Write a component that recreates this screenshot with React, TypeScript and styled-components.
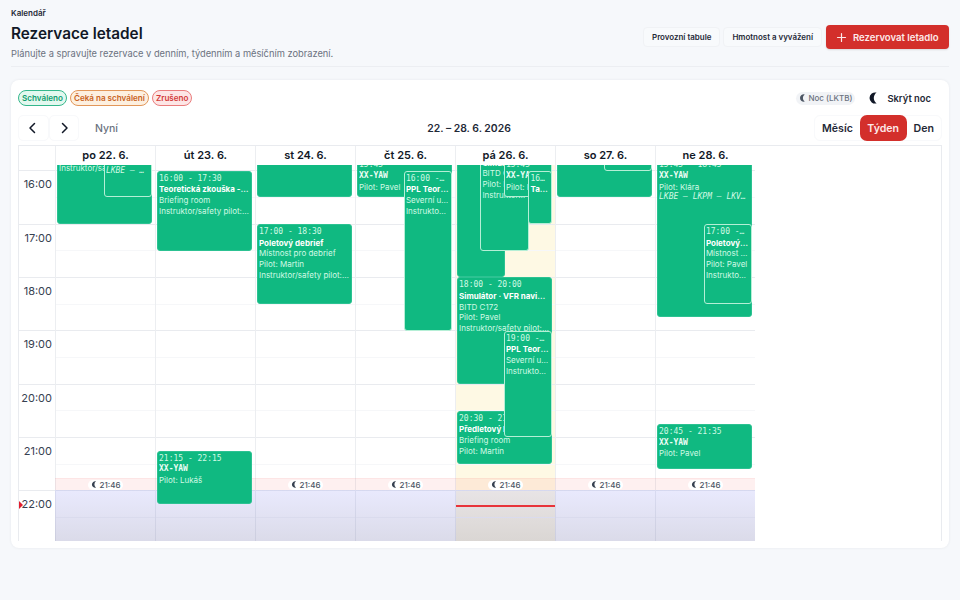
import React from "react";
import styled, { createGlobalStyle } from "styled-components";

const HOUR = 53.333;
const FIRST_HOUR = 15;
const HOURS = [15, 16, 17, 18, 19, 20, 21, 22];

const Global = createGlobalStyle`
  html, body { margin: 0; padding: 0; background: #f6f8fb; }
  body { font-family: Inter, "Liberation Sans", sans-serif; color: #111827; }
  * { box-sizing: border-box; }
`;

const Page = styled.div`
  width: 960px;
  height: 600px;
  padding: 8px 11px 0;
  overflow: hidden;
`;
const Crumb = styled.div`
  font-size: 8px;
  font-weight: 600;
  line-height: 11px;
  height: 11px;
  color: #1f2937;
`;
const HeaderRow = styled.header`
  display: flex;
  justify-content: space-between;
  align-items: flex-start;
  height: 48px;
  border-bottom: 1px solid #eceef2;
`;
const Title = styled.h1`
  margin: 5px 0 0;
  font-size: 15.3px;
  line-height: 20px;
  font-weight: 600;
  color: #111827;
`;
const Subtitle = styled.p`
  margin: 2.5px 0 0;
  font-size: 9.3px;
  line-height: 13px;
  color: #6b7280;
`;
const Actions = styled.div`
  display: flex;
  align-items: center;
  gap: 3px;
  margin-top: 6px;
`;
const GhostButton = styled.button`
  height: 20px;
  padding: 0 8px;
  border: 1px solid #f0f2f5;
  border-radius: 4px;
  background: #f8fafc;
  font: 600 7.95px Inter, sans-serif;
  color: #1f2937;
  white-space: nowrap;
`;
const PrimaryButton = styled.button`
  display: flex;
  align-items: center;
  gap: 6px;
  height: 24px;
  width: 123px;
  margin-left: 1px;
  padding: 0 0 0 10px;
  border: 0;
  border-radius: 4px;
  background: #d32f2b;
  font: 600 9.55px Inter, sans-serif;
  color: #fdeaea;
  white-space: nowrap;
  box-shadow: 0 1px 2px rgba(0, 0, 0, 0.12);
`;
const Card = styled.section`
  margin-top: 13px;
  width: 938px;
  height: 468px;
  padding: 10px 7px 7px;
  background: #fff;
  border-radius: 8px;
  box-shadow: 0 0 3px rgba(17, 24, 39, 0.07);
`;
const LegendRow = styled.div`
  display: flex;
  align-items: center;
  justify-content: space-between;
  height: 16px;
`;
const Legend = styled.div`
  display: flex;
  gap: 3px;
`;
const tones = {
  green: ["#e3f8ef", "#34b78c", "#0f9d6e"],
  orange: ["#fdf0e0", "#e2975a", "#c8621c"],
  red: ["#fde6e6", "#ea7d7d", "#d33a3a"],
} as const;
const Pill = styled.span<{ $tone: keyof typeof tones }>`
  height: 16px;
  padding: 0 3px;
  border-radius: 8px;
  border: 1px solid ${(p) => tones[p.$tone][1]};
  background: ${(p) => tones[p.$tone][0]};
  color: ${(p) => tones[p.$tone][2]};
  font-size: 8.1px;
  font-weight: 600;
  line-height: 14px;
  white-space: nowrap;
`;
const NightTools = styled.div`
  display: flex;
  align-items: center;
  margin-right: 11px;
`;
const NightChip = styled.span`
  display: flex;
  align-items: center;
  gap: 1.5px;
  height: 13px;
  padding: 0 3px;
  border-radius: 7px;
  background: #f1f3f6;
  color: #6b7280;
  font-size: 8px;
  font-weight: 500;
`;
const NightToggle = styled.span`
  display: flex;
  align-items: center;
  gap: 7px;
  margin-left: 13px;
  font-size: 9.4px;
  font-weight: 600;
  color: #1f2937;
`;
const NavRow = styled.div`
  display: flex;
  align-items: center;
  justify-content: space-between;
  height: 26px;
  margin-top: 9px;
`;
const NavLeft = styled.div`
  display: flex;
  align-items: center;
`;
const NavButton = styled.button`
  display: flex;
  align-items: center;
  justify-content: center;
  width: 30.5px;
  height: 26px;
  padding: 0;
  border: 1px solid #f8f9fb;
  border-radius: 5px;
  background: #fff;
  color: #111827;
`;
const NowLabel = styled.span`
  margin-left: 16px;
  font-size: 10.5px;
  font-weight: 500;
  color: #6b7280;
`;
const RangeTitle = styled.div`
  flex: 1;
  text-align: center;
  padding-left: 6px;
  font-size: 10.4px;
  font-weight: 600;
  color: #1f2937;
`;
const ViewSwitch = styled.div`
  display: flex;
  align-items: center;
  height: 26px;
  padding: 0 7px;
  border: 1px solid #f8f9fb;
  border-radius: 6px;
  gap: 7px;
`;
const ViewTab = styled.span<{ $active?: boolean }>`
  display: flex;
  align-items: center;
  height: 26px;
  padding: 0 ${(p) => (p.$active ? "7.5px" : "0")};
  border-radius: 7px;
  background: ${(p) => (p.$active ? "#d32f2b" : "transparent")};
  color: ${(p) => (p.$active ? "#fde8e8" : "#1f2937")};
  font-size: 10.6px;
  font-weight: 600;
`;
const Calendar = styled.div`
  margin-top: 4px;
  height: 396px;
  border: 1px solid #e9ebef;
  border-bottom: 0;
  overflow: hidden;
`;
const HeadRow = styled.div`
  display: grid;
  grid-template-columns: 36px repeat(7, 100px);
  height: 19px;
`;
const HeadCell = styled.div`
  border-left: 1px solid #eceef1;
  font-size: 11px;
  font-weight: 600;
  line-height: 18px;
  text-align: center;
  color: #111827;
  &:first-child { border-left: 0; }
`;
const Viewport = styled.div`
  height: 376px;
  overflow: hidden;
`;
const Timeline = styled.div`
  display: grid;
  grid-template-columns: 36px repeat(7, 100px);
  margin-top: -48px;
  position: relative;
`;
const Gutter = styled.div`
  position: relative;
`;
const HourLabel = styled.div`
  height: ${HOUR}px;
  padding: 6px 3px 0 0;
  border-top: 1px solid #e9ebef;
  text-align: right;
  font-size: 11px;
  line-height: 14px;
  color: #374151;
`;
const NowMarker = styled.span`
  position: absolute;
  left: 0;
  width: 0;
  height: 0;
  border-left: 4.5px solid #e11d2e;
  border-top: 4px solid transparent;
  border-bottom: 4px solid transparent;
`;
const DayColumn = styled.div<{ $today?: boolean }>`
  position: relative;
  border-left: 1.5px solid #eceef1;
  background: ${(p) => (p.$today ? "#fef9e4" : "#fff")};
`;
const Slot = styled.div<{ $hour?: boolean }>`
  height: ${HOUR / 2}px;
  border-top: 1px solid ${(p) => (p.$hour ? "#e9ebef" : "#f6f7f9")};
`;
const Twilight = styled.div`
  position: absolute;
  left: -1px;
  right: 0;
  background: rgba(239, 68, 68, 0.08);
  border-top: 1px solid rgba(239, 68, 68, 0.06);
`;
const NightShade = styled.div`
  position: absolute;
  left: -1px;
  right: 0;
  background: linear-gradient(rgba(99, 102, 241, 0.14), rgba(70, 70, 140, 0.2));
`;
const SunsetBadge = styled.span`
  position: absolute;
  left: 50%;
  transform: translateX(-50%);
  display: flex;
  align-items: center;
  gap: 2px;
  height: 10px;
  padding: 0 3px;
  border-radius: 5px;
  background: #fff;
  color: #4b5563;
  font-size: 8px;
  font-weight: 500;
  z-index: 1;
`;
const NowLine = styled.div`
  position: absolute;
  left: 0;
  right: 0;
  height: 2px;
  background: #e8343a;
  z-index: 1;
`;
const EventBox = styled.div<{ $nested?: boolean }>`
  position: absolute;
  z-index: 2;
  padding: 2px ${(p) => (p.$nested ? "2.4px 0 1.2px" : "1.5px 0 1px")};
  overflow: hidden;
  background: #10b981;
  border: 1px solid ${(p) => (p.$nested ? "#b5efd6" : "#2cc292")};
  border-radius: 3px;
`;
const lineBase = `
  white-space: nowrap;
  overflow: hidden;
  text-overflow: ellipsis;
  height: 10.6px;
  line-height: 10.6px;
`;
const EventTime = styled.div`
  ${lineBase}
  font-family: "DejaVu Sans Mono", monospace;
  font-size: 8px;
  color: #d1fae5;
`;
const EventTitle = styled.div`
  ${lineBase}
  font-size: 8px;
  font-weight: 700;
  color: #fff;
`;
const EventIdent = styled.div`
  ${lineBase}
  font-family: "DejaVu Sans Mono", monospace;
  font-size: 8px;
  font-weight: 700;
  color: #ecfdf5;
`;
const EventInfo = styled.div`
  ${lineBase}
  font-size: 8px;
  color: #d1fae5;
`;
const EventRoute = styled.div`
  ${lineBase}
  font-family: "DejaVu Sans Mono", monospace;
  font-size: 8px;
  font-style: italic;
  color: #d1fae5;
`;

type Ev = {
  s: number;
  e: number;
  left?: number;
  width?: number;
  nested?: boolean;
  time: string;
  title?: string;
  ident?: string;
  info?: string[];
  route?: string;
};

const FULL = { left: 1, width: 95 };
const HALF = { left: 47.7, width: 48.3, nested: true };
const INSTR = "Instruktor/safety pilot: Jan";

const days: { label: string; today?: boolean; events: Ev[] }[] = [
  {
    label: "po 22. 6.",
    events: [
      { s: 15, e: 17, ...FULL, time: "15:00 - 17:00", title: "Teoretická zkouška", info: ["Briefing room", "Pilot: Lukáš", INSTR] },
      { s: 15.25, e: 16.5, ...HALF, time: "15:15 - 16:30", ident: "XX-YAW", info: ["Pilot: Klára"], route: "LKBE – LKPM" },
    ],
  },
  {
    label: "út 23. 6.",
    events: [
      { s: 16, e: 17.5, ...FULL, time: "16:00 - 17:30", title: "Teoretická zkouška - PPL", info: ["Briefing room", INSTR] },
      { s: 21.25, e: 22.25, ...FULL, time: "21:15 - 22:15", ident: "XX-YAW", info: ["Pilot: Lukáš"] },
    ],
  },
  {
    label: "st 24. 6.",
    events: [
      { s: 15, e: 16.5, ...FULL, time: "15:00 - 16:30" },
      { s: 17, e: 18.5, ...FULL, time: "17:00 - 18:30", title: "Poletový debrief", info: ["Místnost pro debrief", "Pilot: Martin", INSTR] },
    ],
  },
  {
    label: "čt 25. 6.",
    events: [
      { s: 15.75, e: 16.5, ...FULL, time: "15:45", ident: "XX-YAW", info: ["Pilot: Pavel"] },
      { s: 16, e: 19, ...HALF, time: "16:00 - 19:00", title: "PPL Teorie letu", info: ["Severní učebna", INSTR] },
    ],
  },
  {
    label: "pá 26. 6.",
    today: true,
    events: [
      { s: 15, e: 18, left: 1, width: 47.5, time: "15:00 - 18:00" },
      { s: 15.5, e: 17.5, left: 24.2, width: 48.5, nested: true, time: "15:30 - 17:30", title: "Simulátor", info: ["BITD C172", "Pilot: Pavel", INSTR] },
      { s: 15.75, e: 16.5, ...HALF, time: "15:45", ident: "XX-YAW", info: ["Pilot: Klára"] },
      { s: 16, e: 17, left: 72.2, width: 24, nested: true, time: "16:00 - 17:00", title: "Tankování" },
      { s: 18, e: 20, ...FULL, time: "18:00 - 20:00", title: "Simulátor · VFR navigace", info: ["BITD C172", "Pilot: Pavel", INSTR] },
      { s: 20.5, e: 21.5, ...FULL, time: "20:30 - 21:30", title: "Předletový briefing", info: ["Briefing room", "Pilot: Martin"] },
      { s: 19, e: 21, ...HALF, time: "19:00 - 21:00", title: "PPL Teorie letu", info: ["Severní učebna", INSTR] },
    ],
  },
  {
    label: "so 27. 6.",
    events: [
      { s: 15, e: 16.5, ...FULL, time: "15:00 - 16:30" },
      { s: 15, e: 16, ...HALF, time: "15:00 - 16:00" },
    ],
  },
  {
    label: "ne 28. 6.",
    events: [
      { s: 15.75, e: 18.75, ...FULL, time: "15:45 - 18:45", ident: "XX-YAW", info: ["Pilot: Klára"], route: "LKBE – LKPM – LKVO – LKBE" },
      { s: 17, e: 18.5, ...HALF, time: "17:00 - 18:30", title: "Poletový debrief", info: ["Místnost pro debrief", "Pilot: Pavel", INSTR] },
      { s: 20.75, e: 21.583, ...FULL, time: "20:45 - 21:35", ident: "XX-YAW", info: ["Pilot: Pavel"] },
    ],
  },
];

const yOf = (hour: number) => (hour - FIRST_HOUR) * HOUR;
const SUNSET = 21 + 46 / 60;
const NOW = 22 + 17 / 60;

const Moon = ({ size = 8, color = "currentColor" }: { size?: number; color?: string }) => (
  <svg width={size} height={size} viewBox="0 0 12 12" aria-hidden="true">
    <path d="M8.6 0.6A5.6 5.6 0 1 0 8.6 11.4 6.6 6.6 0 0 1 8.6 0.6Z" fill={color} />
  </svg>
);

const Chevron = ({ dir }: { dir: "l" | "r" }) => (
  <svg width="12" height="12" viewBox="0 0 12 12" fill="none" stroke="currentColor" strokeWidth="1.5" strokeLinecap="round" strokeLinejoin="round" aria-hidden="true">
    <path d={dir === "l" ? "M7.5 1.5 3 6l4.5 4.5" : "M4.5 1.5 9 6l-4.5 4.5"} />
  </svg>
);

const Plus = () => (
  <svg width="11" height="11" viewBox="0 0 11 11" stroke="currentColor" strokeWidth="1.2" strokeLinecap="round" aria-hidden="true">
    <path d="M5.5 1.5v8M1.5 5.5h8" />
  </svg>
);

const EventCard = ({ ev }: { ev: Ev }) => (
  <EventBox
    $nested={ev.nested}
    style={{ top: yOf(ev.s) + 0.5, height: (ev.e - ev.s) * HOUR, left: ev.left, width: ev.width }}
  >
    <EventTime>{ev.time}</EventTime>
    {ev.title && <EventTitle>{ev.title}</EventTitle>}
    {ev.ident && <EventIdent>{ev.ident}</EventIdent>}
    {ev.info?.map((line) => <EventInfo key={line}>{line}</EventInfo>)}
    {ev.route && <EventRoute>{ev.route}</EventRoute>}
  </EventBox>
);

export default function App() {
  return (
    <>
      <Global />
      <Page>
        <Crumb>Kalendář</Crumb>
        <HeaderRow>
          <div>
            <Title>Rezervace letadel</Title>
            <Subtitle>Plánujte a spravujte rezervace v denním, týdenním a měsíčním zobrazení.</Subtitle>
          </div>
          <Actions>
            <GhostButton>Provozní tabule</GhostButton>
            <GhostButton>Hmotnost a vyvážení</GhostButton>
            <PrimaryButton><Plus />Rezervovat letadlo</PrimaryButton>
          </Actions>
        </HeaderRow>
        <Card>
          <LegendRow>
            <Legend>
              <Pill $tone="green">Schváleno</Pill>
              <Pill $tone="orange">Čeká na schválení</Pill>
              <Pill $tone="red">Zrušeno</Pill>
            </Legend>
            <NightTools>
              <NightChip><Moon size={8} color="#4b5563" />Noc (LKTB)</NightChip>
              <NightToggle><Moon size={12} color="#111827" />Skrýt noc</NightToggle>
            </NightTools>
          </LegendRow>
          <NavRow>
            <NavLeft>
              <NavButton aria-label="Předchozí"><Chevron dir="l" /></NavButton>
              <NavButton aria-label="Další"><Chevron dir="r" /></NavButton>
              <NowLabel>Nyní</NowLabel>
            </NavLeft>
            <RangeTitle>22. – 28. 6. 2026</RangeTitle>
            <ViewSwitch>
              <ViewTab>Měsíc</ViewTab>
              <ViewTab $active>Týden</ViewTab>
              <ViewTab>Den</ViewTab>
            </ViewSwitch>
          </NavRow>
          <Calendar>
            <HeadRow>
              <HeadCell />
              {days.map((d) => <HeadCell key={d.label}>{d.label}</HeadCell>)}
            </HeadRow>
            <Viewport>
              <Timeline>
                <Gutter>
                  {HOURS.map((h) => <HourLabel key={h}>{h}:00</HourLabel>)}
                  <NowMarker style={{ top: yOf(NOW) - 4 }} />
                </Gutter>
                {days.map((d) => (
                  <DayColumn key={d.label} $today={d.today}>
                    {HOURS.map((h) => (
                      <React.Fragment key={h}>
                        <Slot $hour />
                        <Slot />
                      </React.Fragment>
                    ))}
                    <Twilight style={{ top: yOf(SUNSET), height: yOf(22) - yOf(SUNSET) }} />
                    <NightShade style={{ top: yOf(22), height: HOUR }} />
                    <SunsetBadge style={{ top: yOf(SUNSET) + 2 }}><Moon size={7} color="#374151" />21:46</SunsetBadge>
                    {d.today && <NowLine style={{ top: yOf(NOW) - 0.5 }} />}
                    {d.events.map((ev) => <EventCard key={ev.time + ev.s + (ev.left ?? 0)} ev={ev} />)}
                  </DayColumn>
                ))}
              </Timeline>
            </Viewport>
          </Calendar>
        </Card>
      </Page>
    </>
  );
}
